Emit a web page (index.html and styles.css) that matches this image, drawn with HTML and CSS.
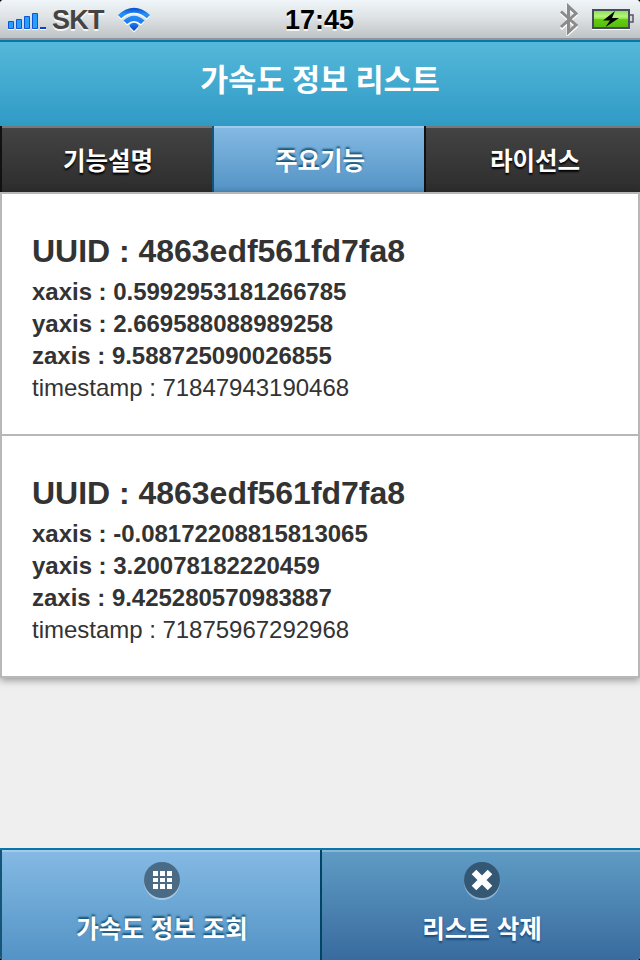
FILE: index.html
```
<!DOCTYPE html>
<html lang="ko">
<head>
<meta charset="utf-8">
<title>가속도 정보 리스트</title>
<link rel="stylesheet" href="styles.css">
</head>
<body>
<div class="screen">
  <div class="status">
    <svg class="signal" width="40" height="20" viewBox="0 0 40 20">
      <path d="M0 18h6v1H0zM8 18h6v1H8zM16 18h6v1h-6zM24 18h6v1h-6zM32 18h6v1h-6z" fill="#fff"/>
      <g fill="#27a0fa" stroke="#0d55d8"><path d="M.5 10.500h5v7h-5zM8.500 8.500h5v9h-5zM16.500 5.500h5v12h-5zM24.500 2.500h5v15h-5z"/></g>
      <path d="M32 16h6v2h-6z" fill="#0b3fd0"/>
    </svg>
    <span class="carrier">SKT</span>
    <svg class="wifi" width="34" height="26" viewBox="0 0 34 26">
      <defs><linearGradient id="wave" x1="0" y1="0" x2="0" y2="25" gradientUnits="userSpaceOnUse"><stop offset="0" stop-color="#0745c8"/><stop offset=".3" stop-color="#2593f8"/><stop offset=".65" stop-color="#1b7bf0"/><stop offset="1" stop-color="#0738ba"/></linearGradient></defs>
      <g fill="#fff" transform="translate(0 1.500)"><path d="M0 8Q16-6.500 32 8l-3.200 3.200Q16 .5 3.200 11.200zM5.500 13.500q10.500-9.500 21 0L23 17q-7-6-14 0zM11.500 18q4.500-4.500 9 0L20 20l-4 4-4-4z"/></g>
      <path d="M0 8Q16-6.500 32 8l-3.200 3.200Q16 .5 3.200 11.200zM5.500 13.500q10.500-9.500 21 0L23 17q-7-6-14 0zM11.500 18q4.500-4.500 9 0L20 20l-4 4-4-4z" fill="url(#wave)"/>
    </svg>
    <span class="clock">17:45</span>
    <svg class="bluetooth" width="20" height="34" viewBox="0 0 20 34">
      <path d="M2 10l15 14-8 7V5l8 7L2 26" fill="none" stroke="#fff" stroke-width="3" transform="translate(0 1)"/>
      <path d="M2 9.500l15 13.500-7.500 7V4.500l7.500 7L2 25" fill="none" stroke="#8b8b8b" stroke-width="3"/>
    </svg>
    <svg class="battery" width="42" height="24" viewBox="0 0 42 24">
      <defs><linearGradient id="charge" x1="0" y1="0" x2="0" y2="1"><stop offset="0" stop-color="#80dc50"/><stop offset=".35" stop-color="#b6f47c"/><stop offset=".48" stop-color="#8ee841"/><stop offset=".5" stop-color="#64d010"/><stop offset="1" stop-color="#56b80e"/></linearGradient></defs>
      <path d="M0 22h38v1H0z" fill="#fff"/>
      <path d="M38 8h3v7h-3" fill="#d5dadd" stroke="#535767" stroke-width="1.500"/>
      <rect x="1" y="3" width="36" height="18" fill="url(#charge)" stroke="#474b5c" stroke-width="2"/>
      <path d="M23 4L11 13.500h7L13.500 20 27 11h-7z" fill="#000"/>
    </svg>
  </div>
  <header class="header"><h1 class="title">가속도 정보 리스트</h1></header>
  <nav class="tabs">
    <a class="tab">기능설명</a>
    <a class="tab tab-active">주요기능</a>
    <a class="tab">라이선스</a>
  </nav>
  <main class="content">
    <ul class="list">
      <li class="item">
        <h2 class="uuid">UUID : 4863edf561fd7fa8</h2>
        <p class="axis">xaxis : 0.5992953181266785</p>
        <p class="axis">yaxis : 2.669588088989258</p>
        <p class="axis">zaxis : 9.588725090026855</p>
        <p class="time">timestamp : 71847943190468</p>
      </li>
      <li class="item">
        <h2 class="uuid">UUID : 4863edf561fd7fa8</h2>
        <p class="axis">xaxis : -0.08172208815813065</p>
        <p class="axis">yaxis : 3.20078182220459</p>
        <p class="axis">zaxis : 9.425280570983887</p>
        <p class="time">timestamp : 71875967292968</p>
      </li>
    </ul>
  </main>
  <footer class="footer">
    <a class="action action-view">
      <svg class="icon" width="36" height="38" viewBox="0 0 36 38">
        <circle cx="18" cy="20" r="18" fill="#a5c9e6"/><circle cx="18" cy="18" r="18" fill="#4a6b85"/>
        <path d="M9 9h5v5H9zM16 9h5v5h-5zM23 9h5v5h-5zM9 16h5v4H9zM16 16h5v4h-5zM23 16h5v4h-5zM9 22h5v5H9zM16 22h5v5h-5zM23 22h5v5h-5z" fill="#fff"/>
      </svg>
      <span>가속도 정보 조회</span>
    </a>
    <a class="action action-delete">
      <svg class="icon" width="36" height="38" viewBox="0 0 36 38">
        <circle cx="18" cy="20" r="18" fill="#8db3d1"/><circle cx="18" cy="18" r="18" fill="#345773"/>
        <path d="M10 10l16 16M26 10L10 26" fill="none" stroke="#fff" stroke-width="6.500"/>
      </svg>
      <span>리스트 삭제</span>
    </a>
  </footer>
</div>
</body>
</html>
```
FILE: styles.css
```
* { box-sizing: border-box; }
body { margin: 0; background: #000; }
h1, h2, p, ul { margin: 0; padding: 0; list-style: none; }
.screen {
  width: 640px; height: 960px; overflow: hidden;
  display: flex; flex-direction: column;
  border-radius: 4px;
  background: #eee;
  color: #333;
  font-family: "Liberation Sans", "Noto Sans CJK KR", sans-serif;
}
.status {
  height: 40px; flex: none;
  display: grid;
  grid-template-columns: 44px 66px 167px 1fr 20px 55px;
  align-items: start;
  padding: 0 6px 0 8px;
  border-bottom: 2px solid #919496;
  background: linear-gradient(#eff5f8, #dfe3e6 45%, #bec3c6);
  font-weight: bold; font-size: 27px; line-height: 40px;
  text-shadow: 0 2px 0 rgba(255,255,255,.8);
}
.signal { margin-top: 11px; }
.carrier { color: #444; letter-spacing: -.8px; }
.wifi { margin-top: 7px; }
.clock { color: #000; }
.bluetooth { margin-top: 2px; }
.battery { margin-top: 7px; justify-self: end; }
.header {
  height: 86px; flex: none;
  border-top: 2px solid #0876a8;
  background: linear-gradient(#54b8d9, #309ac6);
  text-align: center;
}
.title { font-size: 30.5px; line-height: 77px; font-weight: bold; color: #fff; word-spacing: -1px; }
.tabs { height: 66px; flex: none; display: grid; grid-template-columns: 212px 212px 216px; }
.tab {
  padding-left: 2px;
  border-left: 2px solid #111;
  box-shadow: inset 0 2px #777;
  background: linear-gradient(#444, #2d2d2d);
  color: #fff; text-align: center;
  font-size: 24.500px; line-height: 71px; height: 66px; font-weight: bold;
  text-shadow: 0 2px 2px #000;
}
.tab:last-child { padding-left: 4px; }
.tab-active {
  border-left-color: #155678;
  box-shadow: inset 0 2px #a5c9ea;
  background: linear-gradient(#85bae4, #5393c5);
  text-shadow: 0 -2px 2px #145072;
}
.content { flex: 1; background: #efefef; }
.list { border: 2px solid #b8b8b8; background: #fff; box-shadow: 0 2px 8px rgba(0,0,0,.4); }
.item { height: 240px; padding: 37px 30px 0; }
.item + .item { height: 242px; border-top: 2px solid #b8b8b8; }
.uuid { font-size: 32px; line-height: 40px; margin-bottom: 5px; letter-spacing: -.02px; }
.axis, .time { font-size: 24px; line-height: 32px; letter-spacing: -.02px; }
.axis { font-weight: bold; }
.footer {
  height: 112px; flex: none;
  display: grid; grid-template-columns: 1fr 1fr;
  border-top: 2px solid #0876a8;
}
.action {
  display: flex; flex-direction: column; align-items: center;
  padding: 12px 0 0 2px;
  border-left: 2px solid #004563;
  color: #fff; font-size: 24.500px; line-height: 38px; font-weight: bold;
}
.action span { margin-top: 11px; }
.action-view {
  border-left-color: #155678;
  box-shadow: inset 0 2px #a5c9ea;
  background: linear-gradient(#85bae4, #5393c5);
  text-shadow: 0 -2px 2px #145072;
}
.action-delete {
  box-shadow: inset 0 2px #8db5d3;
  background: linear-gradient(#5f9cc5, #396b9e);
  text-shadow: 0 2px 2px #194b7c;
}
```
